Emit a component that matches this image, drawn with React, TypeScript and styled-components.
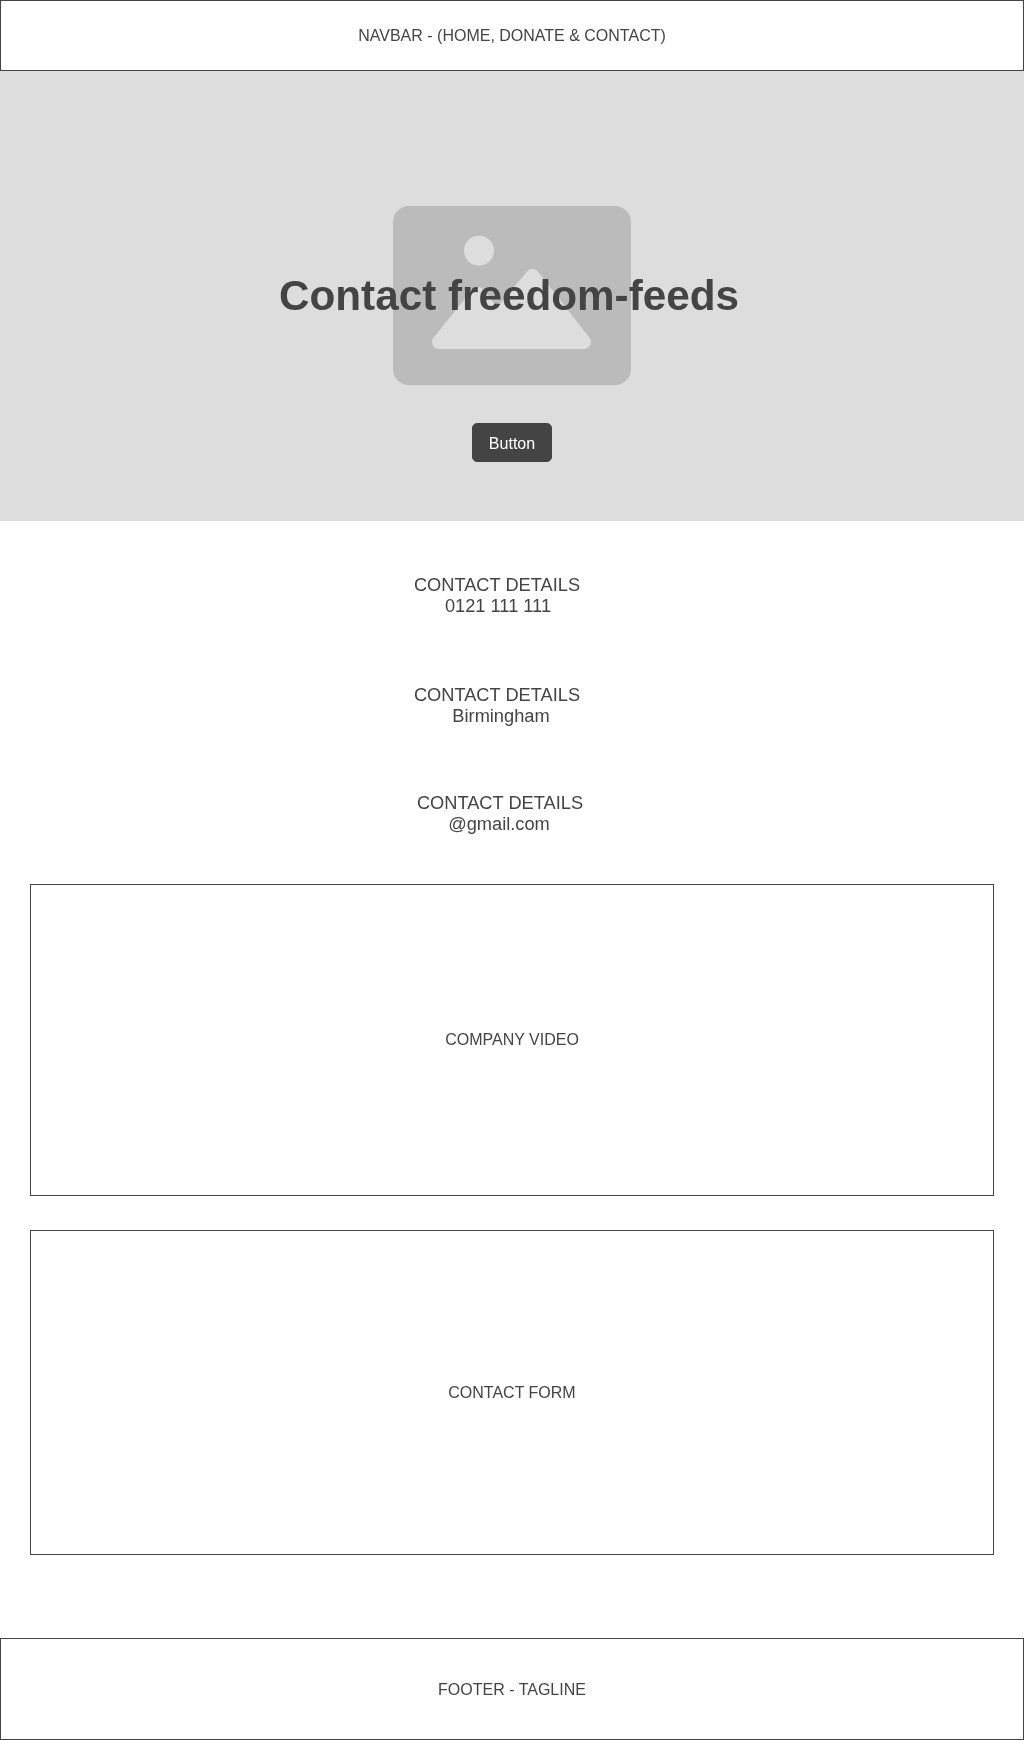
import React from "react";
import styled, { createGlobalStyle } from "styled-components";

const Global = createGlobalStyle`
  html, body { margin: 0; padding: 0; background: #fff; }
  body { font-family: "Liberation Sans", Arial, sans-serif; color: #444; }
  * { box-sizing: border-box; }
`;

const Page = styled.div`
  width: 1024px;
  height: 1740px;
  display: flex;
  flex-direction: column;
  will-change: transform;
`;

const Bar = styled.div<{ $h: number; $nudge?: number }>`
  height: ${(p) => p.$h}px;
  border: 1px solid #444;
  display: flex;
  align-items: center;
  justify-content: center;
  font-size: 16px;
  flex: none;
  padding-top: ${(p) => p.$nudge ?? 0}px;
`;

const Hero = styled.section`
  height: 450px;
  flex: none;
  background: #ddd;
  display: flex;
  flex-direction: column;
  align-items: center;
  padding-top: 135px;
`;

const Figure = styled.div`
  position: relative;
  width: 238px;
  height: 179px;
  display: flex;
  justify-content: center;
`;

const Title = styled.h1`
  position: absolute;
  top: 67px;
  left: 50%;
  transform: translateX(-50%);
  margin: 0 0 0 -3px;
  font-size: 42.24px;
  line-height: 46px;
  font-weight: 700;
  white-space: nowrap;
  color: #444;
`;

const HeroButton = styled.button`
  margin-top: 38px;
  width: 80px;
  height: 39px;
  border: 1px solid #444;
  border-radius: 5px;
  background: #444;
  color: #fff;
  font-family: inherit;
  font-size: 16px;
  padding: 2px 0 0;
`;

const Details = styled.div`
  display: flex;
  flex-direction: column;
  align-items: center;
  padding-top: 53px;
`;

const Detail = styled.div<{ $gap: number }>`
  margin-bottom: ${(p) => p.$gap}px;
  font-size: 18.24px;
  line-height: 21px;
  text-align: center;
`;

const Line = styled.div<{ $shift: number }>`
  padding-right: ${(p) => (p.$shift < 0 ? -p.$shift * 2 : 0)}px;
  padding-left: ${(p) => (p.$shift > 0 ? p.$shift * 2 : 0)}px;
  white-space: nowrap;
`;

const Block = styled.div<{ $h: number; $mt: number }>`
  margin: ${(p) => p.$mt}px 30px 0;
  height: ${(p) => p.$h}px;
  border: 1px solid #444;
  display: flex;
  align-items: center;
  justify-content: center;
  font-size: 16px;
  flex: none;
`;

const Spacer = styled.div`
  flex: 1;
`;

const Placeholder = () => (
  <svg width="238" height="179" viewBox="0 0 238 179" aria-hidden="true">
    <rect width="238" height="179" rx="16" fill="#bbb" />
    <circle cx="86" cy="44.7" r="15" fill="#ddd" />
    <path
      d="M139.5 70 L191 136 L46 136 L85 88 L104 112 Z"
      fill="#ddd"
      stroke="#ddd"
      strokeWidth="14"
      strokeLinejoin="round"
    />
  </svg>
);

const details = [
  { a: "CONTACT DETAILS", as: -15, b: "0121 111 111", bs: -14, gap: 68 },
  { a: "CONTACT DETAILS", as: -15, b: "Birmingham", bs: -11, gap: 66 },
  { a: "CONTACT DETAILS", as: -12, b: "@gmail.com", bs: -13, gap: 0 },
];

export default function App() {
  return (
    <Page>
      <Global />
      <Bar $h={71}>NAVBAR - (HOME, DONATE &amp; CONTACT)</Bar>
      <Hero>
        <Figure>
          <Placeholder />
          <Title>Contact freedom-feeds</Title>
        </Figure>
        <HeroButton>Button</HeroButton>
      </Hero>
      <Details>
        {details.map((d, i) => (
          <Detail key={i} $gap={d.gap}>
            <Line $shift={d.as}>{d.a}</Line>
            <Line $shift={d.bs}>{d.b}</Line>
          </Detail>
        ))}
      </Details>
      <Block $h={312} $mt={50}>COMPANY VIDEO</Block>
      <Block $h={325} $mt={34}>CONTACT FORM</Block>
      <Spacer />
      <Bar $h={102} $nudge={1}>FOOTER - TAGLINE</Bar>
    </Page>
  );
}
